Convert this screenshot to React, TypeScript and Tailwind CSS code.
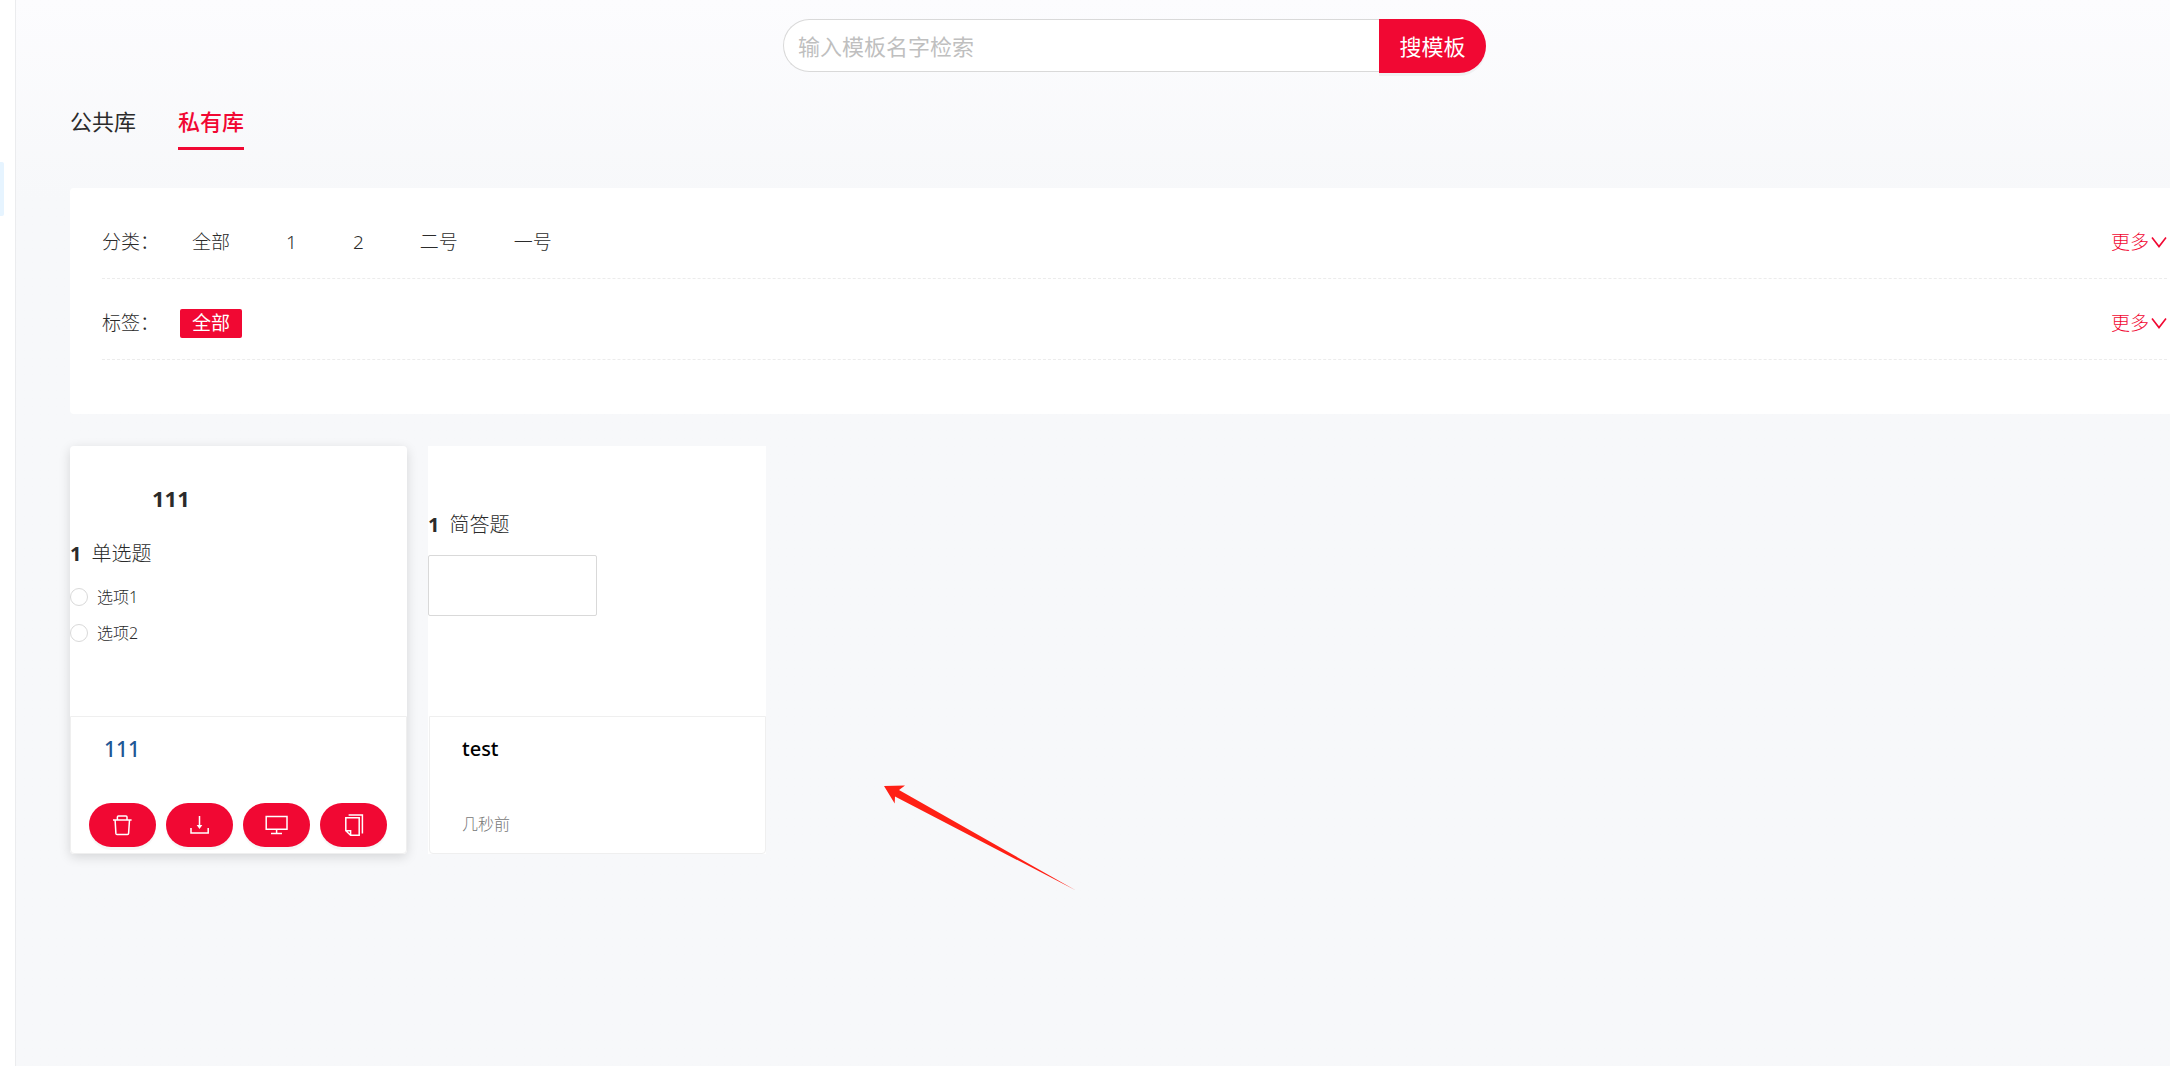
import { useState } from 'react'
import type { ReactNode } from 'react'

const categories = ['全部', '1', '2', '二号', '一号']
const tags = ['全部']

function ChevronDown() {
  return (
    <svg className="h-4 w-4" viewBox="0 0 16 16" fill="none" stroke="currentColor" strokeWidth="1.6">
      <path d="M1 2.6 8 11.6 15 2.6" />
    </svg>
  )
}

function TrashIcon() {
  return (
    <svg className="h-6 w-6" viewBox="0 0 24 24" fill="none" stroke="currentColor" strokeWidth="1.5">
      <path d="M2 7H20.6M6.4 7V4Q6.4 3 7.4 3H15Q16 3 16 4V7M4.1 7 4.9 20.4Q5 21.4 6 21.4H16.5Q17.5 21.4 17.6 20.4L18.5 7" />
    </svg>
  )
}

function DownloadIcon() {
  return (
    <svg className="h-6 w-6" viewBox="0 0 24 24" fill="none" stroke="currentColor" strokeWidth="1.5">
      <path d="M3 15V20H20.2V15M11.5 3V14" />
      <path d="M8.7 12H14.3L11.5 16Z" fill="currentColor" stroke="none" />
    </svg>
  )
}

function MonitorIcon() {
  return (
    <svg className="h-6 w-6" viewBox="0 0 24 24" fill="none" stroke="currentColor" strokeWidth="1.5">
      <path d="M1.2 3.5H22V16.2H1.2ZM11.6 16.2V20.5M6 20.6H17" />
    </svg>
  )
}

function CopyIcon() {
  return (
    <svg className="h-6 w-6" viewBox="0 0 24 24" fill="none" stroke="currentColor" strokeWidth="1.5">
      <path d="M6.6 2H20.4V20.4M3.8 4.7H17.2V22.3H8.6L3.8 17.8ZM3.8 17.8H8.6V22.3" />
    </svg>
  )
}

const actions: { label: string; icon: ReactNode }[] = [
  { label: '删除', icon: <TrashIcon /> },
  { label: '下载', icon: <DownloadIcon /> },
  { label: '预览', icon: <MonitorIcon /> },
  { label: '复制', icon: <CopyIcon /> }
]

function FilterRow({ label, items, active }: { label: string; items: string[]; active?: string }) {
  return (
    <div className="flex items-center border-b border-dashed border-[#ececec] pt-[30px] pb-[21px]">
      <span className="w-[78px] whitespace-nowrap">{label}</span>
      <div className="flex flex-1 gap-8">
        {items.map(item => (
          <button
            key={item}
            className={`h-[29px] rounded-xs px-3 leading-[29px] ${
              item === active ? 'bg-[#f10833] font-normal text-white' : ''
            }`}
          >
            {item}
          </button>
        ))}
      </div>
      <button className="flex items-center gap-0.5 text-[#f10833]">
        更多
        <ChevronDown />
      </button>
    </div>
  )
}

function Question({ title }: { title: string }) {
  return (
    <h3 className="flex gap-[10px] text-xl leading-7 font-light">
      <b className="font-bold">1</b>
      {title}
    </h3>
  )
}

export default function App() {
  const [tab, setTab] = useState('私有库')
  const [keyword, setKeyword] = useState('')

  return (
    <div className="flex min-h-screen overflow-hidden bg-white font-['Noto_Sans','Noto_Sans_CJK_SC',sans-serif] text-[#2b2b2b]">
      <aside className="w-4 shrink-0 border-r border-[#ebecee] pt-[162px]">
        <div className="h-[54px] w-1 rounded-r-xs bg-[#e6f4ff]" />
      </aside>

      <main className="relative min-w-0 flex-1 bg-[#f7f8fa] bg-linear-to-b from-[#fcfcfe] to-[#f7f8fa] to-[200px]">
        {/* 内容区比可视区域宽，右侧超出部分被裁掉 */}
        <div className="w-[calc(100%+83px)] px-[54px] pt-[19px]">
          <form className="flex justify-center" onSubmit={e => e.preventDefault()}>
            <input
              aria-label="输入模板名字检索"
              placeholder="输入模板名字检索"
              value={keyword}
              onChange={e => setKeyword(e.target.value)}
              className="h-[53px] w-[596px] rounded-l-full border border-r-0 border-[#d9d9d9] bg-white px-[14px] text-[22px] outline-none placeholder:text-[#bfbfbf]"
            />
            <button className="h-[54px] w-[107px] rounded-r-full bg-[#f10833] text-[22px] text-white shadow-[0_3px_0_rgba(0,0,0,0.04)]">
              搜模板
            </button>
          </form>

          <nav className="mt-[30px] flex gap-[42px] text-[22px] leading-9">
            {['公共库', '私有库'].map(name => (
              <button
                key={name}
                onClick={() => setTab(name)}
                className={`border-b-3 pb-2 ${
                  tab === name
                    ? 'border-[#f10833] font-medium text-[#f10833]'
                    : 'border-transparent'
                }`}
              >
                {name}
              </button>
            ))}
          </nav>

          <section className="mt-[38px] rounded bg-white px-8 pt-[10px] pb-[54px] text-[19px] leading-[29px] font-light">
            <FilterRow label="分类：" items={categories} />
            <FilterRow label="标签：" items={tags} active="全部" />
          </section>

          <section className="mt-8 flex gap-[21px]">
            <article className="w-[337px] rounded-sm bg-white shadow-[0_3px_12px_rgba(0,0,0,0.14)]">
              <div className="h-[270px] pt-9">
                <h2 className="pl-[82px] text-[22px] leading-8 font-bold">111</h2>
                <div className="mt-[26px]">
                  <Question title="单选题" />
                </div>
                <div className="mt-[17px] flex flex-col gap-3 text-base leading-6 font-light">
                  {['选项1', '选项2'].map(option => (
                    <label key={option} className="flex items-center gap-[9px]">
                      <input
                        type="radio"
                        name="option"
                        className="size-[18px] appearance-none rounded-full border border-[#d9d9d9] bg-white checked:border-[#f10833]"
                      />
                      {option}
                    </label>
                  ))}
                </div>
              </div>
              <div className="h-[138px] rounded-b border border-[#efefef]">
                <a href="#" className="block pt-4 pl-[33px] text-[21px] leading-8 font-medium text-[#1f5796]">
                  111
                </a>
                <div className="mt-[38px] flex gap-[10px] pl-[18px]">
                  {actions.map(action => (
                    <button
                      key={action.label}
                      aria-label={action.label}
                      className="flex h-11 w-[67px] items-center justify-center rounded-full bg-[#f10833] text-white shadow-[0_3px_0_rgba(0,0,0,0.03)]"
                    >
                      {action.icon}
                    </button>
                  ))}
                </div>
              </div>
            </article>

            <article className="w-[338px] bg-white">
              <div className="h-[270px] pt-[65px]">
                <Question title="简答题" />
                <textarea
                  aria-label="简答题"
                  className="mt-4 block h-[61px] w-[169px] resize-none rounded-xs border border-[#d9d9d9] outline-none"
                />
              </div>
              <div className="ml-px h-[138px] rounded-b border border-[#efefef] pl-8">
                <a href="#" className="block pt-4 text-xl leading-8 font-medium text-black">
                  test
                </a>
                <p className="mt-[47px] text-base leading-6 font-light text-[#777]">几秒前</p>
              </div>
            </article>
          </section>
        </div>

        <svg
          className="absolute top-[780px] left-[864px] h-[120px] w-[200px]"
          viewBox="880 780 200 120"
          aria-hidden="true"
        >
          <path fill="#ff2015" d="M884 786 905 785.4 899 790 1076 890.5 895 796.5 894.7 803.5Z" />
        </svg>
      </main>
    </div>
  )
}
